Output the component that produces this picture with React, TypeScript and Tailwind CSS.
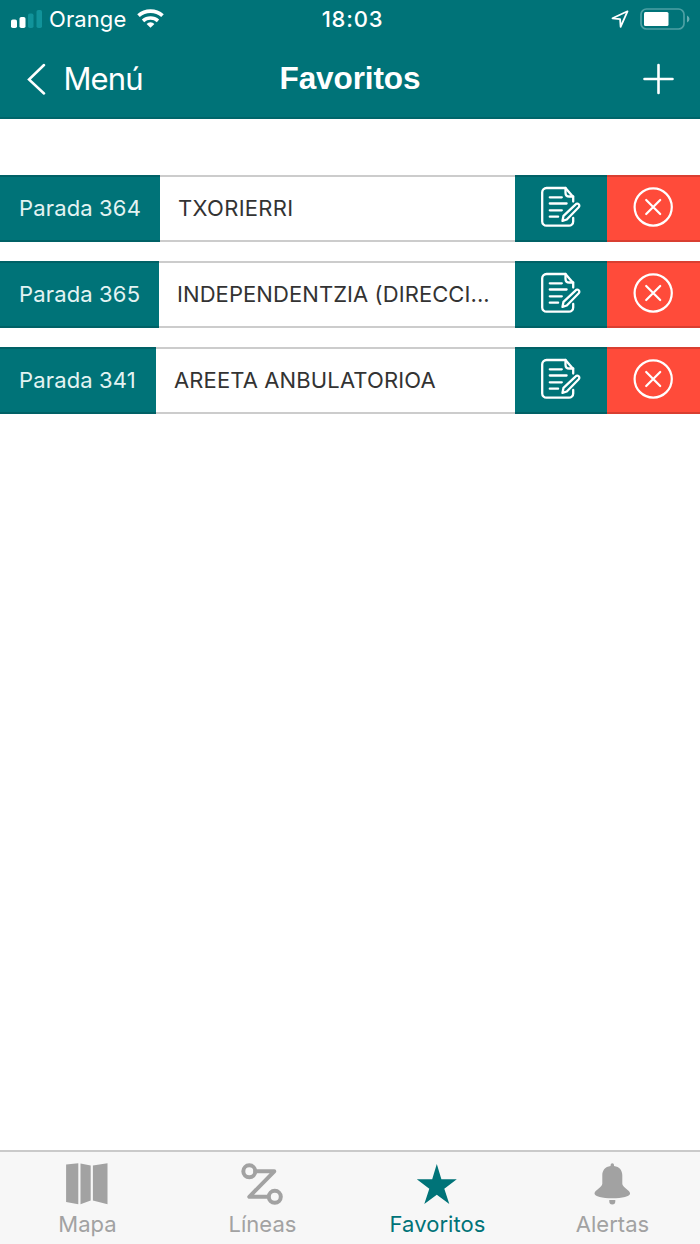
import type { ReactNode } from "react";

const stops = [
  {
    id: "364",
    name: "TXORIERRI",
    labelClass: "w-[160px] tracking-[0.15px]",
    nameClass: "pl-[18px] tracking-[0.3px]",
  },
  {
    id: "365",
    name: "INDEPENDENTZIA (DIRECCI...",
    labelClass: "w-[159px] tracking-[0.15px]",
    nameClass: "pl-[18px] tracking-[0.08px]",
  },
  {
    id: "341",
    name: "AREETA ANBULATORIOA",
    labelClass: "w-[156px] tracking-[0.15px]",
    nameClass: "pl-[18px] tracking-[0.12px]",
  },
];

const EditIcon = () => (
  <svg
    className="h-[44px] w-[44px]"
    viewBox="0.5 0 44 44"
    fill="none"
    stroke="currentColor"
    strokeWidth="2.3"
    strokeLinecap="round"
    strokeLinejoin="round"
  >
    <path d="M34.7 16.5V12L27 3H8a4.3 4.3 0 0 0-4.3 4.3V36.4a4.3 4.3 0 0 0 4.3 4.3H30.4a4.3 4.3 0 0 0 4.3-4.3V33" />
    <path d="M27 3v4.7q0 3.8 3.8 3.8h3.9" />
    <path d="M11.3 12.3h12M11.3 18.500h16.800M11.300 25.300h12M11.300 31.700h8.300" />
    <path d="M25 30.800 37.200 19.300a2.100 2.100 0 0 1 3 3L28.300 34.500l-4.300 1.300Z" />
  </svg>
);

const DeleteIcon = () => (
  <svg
    className="h-[44px] w-[44px]"
    viewBox="0.5 0 44 44"
    fill="none"
    stroke="currentColor"
    strokeWidth="2.2"
    strokeLinecap="round"
  >
    <circle cx="21.7" cy="22" r="18.6" />
    <path d="m14.7 15 14 14M28.7 15 14.7 29" />
  </svg>
);

const StatusBar = () => (
  <div className="grid h-[38px] grid-cols-3 items-center">
    <div className="flex items-center pl-[11px]">
      <svg className="h-[19px] w-[32px]" viewBox="0 0 32 19">
        <rect x="0" y="9.5" width="6" height="8.5" rx="1.8" fill="#fff" />
        <rect x="8.5" y="7" width="6" height="11" rx="1.8" fill="#fff" />
        <rect x="17" y="3.5" width="5.5" height="14.5" rx="1.8" fill="#11939a" />
        <rect x="25.5" y="0" width="5.5" height="18" rx="1.8" fill="#11939a" />
      </svg>
      <span className="ml-[6px] text-[22px] leading-none tracking-[0.1px]">
        Orange
      </span>
      <svg className="ml-[11px] h-[20px] w-[28px]" viewBox="0 0.5 28 20" fill="none" stroke="#fff">
        <path d="M1.5 7.2a18 18 0 0 1 24 0" strokeWidth="3.8" />
        <path d="M6 12.3a11.5 11.5 0 0 1 15 0" strokeWidth="3.5" />
        <path d="m13.5 19.3-3.9-3.9a5.5 5.5 0 0 1 7.8 0Z" fill="#fff" stroke="none" />
      </svg>
    </div>
    <span className="pl-[5px] text-center text-[22px] leading-none font-medium tracking-[0.8px]">
      18:03
    </span>
    <div className="flex items-center justify-end pr-[10px]">
      <svg
        className="h-[18px] w-[18px]"
        viewBox="0 0 18 18"
        fill="none"
        stroke="#fff"
        strokeWidth="1.8"
        strokeLinejoin="round"
      >
        <path d="M16.5 1.3 1.5 8.3l7.6.9.5 7.6Z" />
      </svg>
      <svg className="ml-[11px] h-[22px] w-[50px]" viewBox="0 0 50 22">
        <rect x="1" y="1" width="43" height="20" rx="5.5" fill="none" stroke="#4da0a4" strokeWidth="1.7" />
        <rect x="4" y="4" width="24.5" height="14" rx="1.5" fill="#fff" />
        <path d="M47 7.5q2.5 1 2.5 3.5T47 14.5Z" fill="#66adb1" />
      </svg>
    </div>
  </div>
);

const Header = () => (
  <header className="h-[119px] border-b-2 border-[#00656a] bg-[#007378] text-white">
    <StatusBar />
    <div className="grid grid-cols-3 items-center pt-[21px]">
      <button className="flex items-center pl-[27px]">
        <svg className="h-[32px] w-[19px]" viewBox="0 0 19 32" fill="none" stroke="#fff" strokeWidth="2.5" strokeLinecap="round">
          <path d="M17 2 2 16.5 17 30.5" />
        </svg>
        <span className="ml-[17.5px] text-[31px] leading-[40px] tracking-[-0.9px]">Menú</span>
      </button>
      <h1 className="-mt-[2px] text-center font-['Liberation_Sans',sans-serif] text-[31.5px] leading-[40px] font-bold tracking-[-0.1px]">
        Favoritos
      </h1>
      <button className="flex justify-end pr-[26px]">
        <svg className="h-[32px] w-[32px]" viewBox="0 0 32 32" stroke="#fff" strokeWidth="2.6" strokeLinecap="round">
          <path d="M16.5 2v28M2.5 16h28" />
        </svg>
      </button>
    </div>
  </header>
);

const StopList = () => (
  <main className="flex flex-1 flex-col gap-[19px] pt-[56px]">
    {stops.map((stop) => (
      <div key={stop.id} className="flex h-[67px] text-[22px]">
        <div
          className={`${stop.labelClass} flex items-center border-y-2 border-black/15 bg-[#007378] pl-[19px] whitespace-nowrap text-[#e3f3f3]`}
        >
          Parada {stop.id}
        </div>
        <div
          className={`${stop.nameClass} flex flex-1 items-center border-y-2 border-black/20 whitespace-nowrap text-[#333]`}
        >
          {stop.name}
        </div>
        <button className="flex w-[92px] justify-center border-y-2 border-black/15 bg-[#007378] pt-[8px] text-white">
          <EditIcon />
        </button>
        <button className="flex w-[93px] justify-center border-y-2 border-black/15 bg-[#ff4b3a] pt-[8px] text-white">
          <DeleteIcon />
        </button>
      </div>
    ))}
  </main>
);

const TabItem = ({
  label,
  active,
  children,
}: {
  label: string;
  active?: boolean;
  children: ReactNode;
}) => (
  <a
    className={`flex flex-col items-center pt-[10px] ${active ? "text-[#007378]" : "text-[#a2a2a2]"}`}
  >
    <svg className="h-[44px] w-[44px]" viewBox="0.7 -0.3 44 44" fill="currentColor">
      {children}
    </svg>
    <span className="mt-[5px] text-[22px] leading-[27px] tracking-[0.05px]">{label}</span>
  </a>
);

const TabBar = () => (
  <nav className="grid h-[94px] grid-cols-4 border-t-2 border-[#cacaca] bg-[#f7f7f7]">
    <TabItem label="Mapa">
      <path d="M0.8 2.2 13 1v41L0.8 39.6ZM15.2 1.3 25.4 3.3V38.3L15.2 42ZM27.6 3.3 42.2 1v41L27.6 38.3Z" />
    </TabItem>
    <TabItem label="Líneas">
      <g fill="none" stroke="currentColor" strokeWidth="4" strokeLinejoin="round" strokeLinecap="round">
        <circle cx="9" cy="9" r="6" />
        <circle cx="34.5" cy="34.5" r="6" />
        <path d="M15 9h19L9 34.5h19" />
      </g>
    </TabItem>
    <TabItem label="Favoritos" active>
      <path d="m21.5 1.7 4.6 15.3h15.4L29 26.4 34 41.7 21.5 32.4 9 41.7l5-15.3L1.5 17h15.4Z" />
    </TabItem>
    <TabItem label="Alertas">
      <path d="M20.3 3.6v-1a1.7 1.7 0 0 1 3.400 0v1c5.600.8 8.300 4.400 8.300 9.400v8.500c0 3.500 7.800 6.500 7.800 9.700 0 2.800-7.800 4.800-17.800 4.800S4.200 34 4.200 31.200c0-3.200 7.800-6.200 7.800-9.700V13c0-5 2.700-8.600 8.300-9.400Z" />
      <path d="M19 37.800h6v1.400a3 3 0 0 1-6 0Z" />
    </TabItem>
  </nav>
);

export default function App() {
  return (
    <div className="flex h-[1244px] w-[700px] flex-col overflow-hidden bg-white font-[Inter,sans-serif]">
      <Header />
      <StopList />
      <TabBar />
    </div>
  );
}
